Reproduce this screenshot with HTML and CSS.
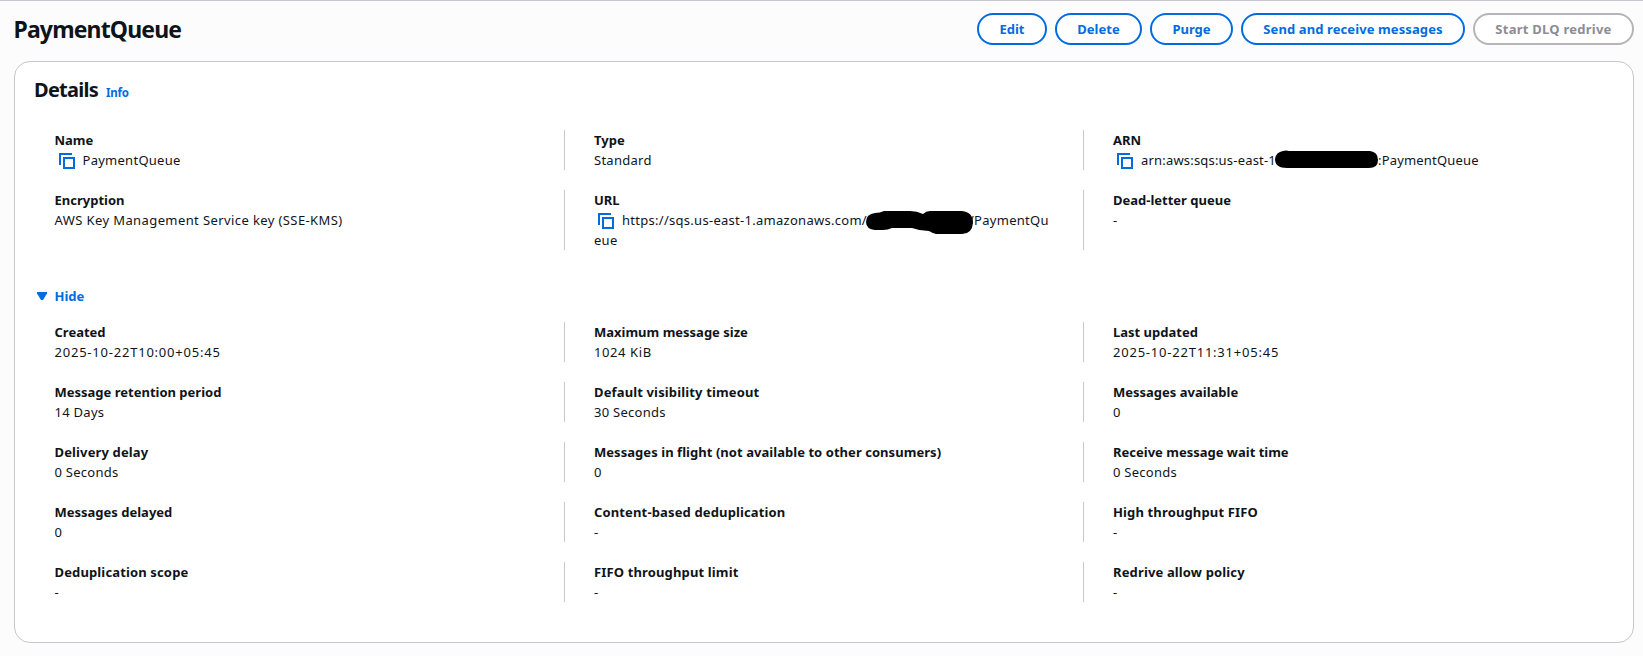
FILE: index.html
```html
<!DOCTYPE html>
<html lang="en">
<head>
<meta charset="utf-8">
<title>PaymentQueue</title>
<link rel="stylesheet" href="styles.css">
</head>
<body>
<svg width="0" height="0" class="defs"><symbol id="copy" viewBox="0 0 16 16"><path d="M13 1H1v11M5 5h10v10H5z" fill="none" stroke="currentColor" stroke-width="2"/></symbol></svg>
<main class="page">
  <header class="header">
    <h1 class="title">PaymentQueue</h1>
    <div class="actions">
      <button class="btn edit">Edit</button>
      <button class="btn delete">Delete</button>
      <button class="btn purge">Purge</button>
      <button class="btn send">Send and receive messages</button>
      <button class="btn redrive" disabled>Start DLQ redrive</button>
    </div>
  </header>
  <section class="panel">
    <div class="panel-head"><h2 class="subtitle">Details</h2><a class="info">Info</a></div>
    <dl class="grid">
      <div class="cell"><dt>Name</dt><dd><svg class="copy"><use href="#copy"/></svg>PaymentQueue</dd></div>
      <div class="cell"><dt>Type</dt><dd>Standard</dd></div>
      <div class="cell"><dt>ARN</dt><dd class="arn"><svg class="copy"><use href="#copy"/></svg>arn:aws:sqs:us-east-1<svg class="mask mask-arn" viewBox="0 0 104 20"><path d="M8 1Q11 0 14 1H95Q103 2 103 10Q103 18 94 18H12Q0 18 0 9Q1 2 8 1Z"/></svg>:PaymentQueue</dd></div>
      <div class="cell"><dt>Encryption</dt><dd class="kms">AWS Key Management Service key (SSE-KMS)</dd></div>
      <div class="cell"><dt>URL</dt><dd class="url"><svg class="copy"><use href="#copy"/></svg>https://sqs.us-east-1.amazonaws.com/<svg class="mask mask-url" viewBox="0 0 107 26"><path d="M9 3Q14 3 18 1H44Q51 1 57 4Q60 1 64 1H96Q107 2 107 13Q106 24 96 24H70Q66 23 63 21Q54 21 46 18H26Q22 20 17 20H9Q0 19 0 12Q0 4 9 3Z"/></svg>/PaymentQueue</dd></div>
      <div class="cell"><dt>Dead-letter queue</dt><dd>-</dd></div>
    </dl>
    <div class="toggle"><svg class="caret" viewBox="0 0 10 8"><path d="M0 0h10v1.5L6 8H4L0 1.5z" fill="currentColor"/></svg><span>Hide</span></div>
    <dl class="grid">
      <div class="cell"><dt>Created</dt><dd class="date">2025-10-22T10:00+05:45</dd></div>
      <div class="cell"><dt>Maximum message size</dt><dd class="size">1024 KiB</dd></div>
      <div class="cell"><dt>Last updated</dt><dd class="date">2025-10-22T11:31+05:45</dd></div>
      <div class="cell"><dt>Message retention period</dt><dd>14 Days</dd></div>
      <div class="cell"><dt class="wide">Default visibility timeout</dt><dd>30 Seconds</dd></div>
      <div class="cell"><dt>Messages available</dt><dd>0</dd></div>
      <div class="cell"><dt class="wide">Delivery delay</dt><dd>0 Seconds</dd></div>
      <div class="cell"><dt class="long">Messages in flight (not available to other consumers)</dt><dd>0</dd></div>
      <div class="cell"><dt>Receive message wait time</dt><dd>0 Seconds</dd></div>
      <div class="cell"><dt>Messages delayed</dt><dd>0</dd></div>
      <div class="cell"><dt class="wide">Content-based deduplication</dt><dd>-</dd></div>
      <div class="cell"><dt class="wide">High throughput FIFO</dt><dd>-</dd></div>
      <div class="cell"><dt class="wide">Deduplication scope</dt><dd>-</dd></div>
      <div class="cell"><dt class="wide">FIFO throughput limit</dt><dd>-</dd></div>
      <div class="cell"><dt class="wide">Redrive allow policy</dt><dd>-</dd></div>
    </dl>
  </section>
</main>
</body>
</html>
```
FILE: styles.css
```css
* { box-sizing: border-box; }
body { margin: 0; background: #fcfcfd; color: #0f141a; font: 13px/20px "Noto Sans", sans-serif; }
.defs { display: block; }
.page { height: 656px; border-top: 1px solid #c6c6cd; padding: 12px 9px 13px 14px; overflow: hidden; }
.header { display: flex; justify-content: space-between; align-items: center; height: 32px; margin-bottom: 16px; }
.title { margin: 0 0 0 -.5px; font-size: 23px; line-height: 32px; font-weight: 700; letter-spacing: -.85px; }
.actions { display: flex; gap: 8px; }
.btn { height: 32px; padding: 0; border: 2px solid #006ce0; border-radius: 16px; background: #fff; color: #006ce0; font: 700 13px/20px "Noto Sans", sans-serif; white-space: nowrap; }
.btn:disabled { border-color: #b4b4bb; color: #8c8c94; }
.edit { width: 70px; }
.delete { width: 87px; }
.purge { width: 83px; }
.send { width: 224px; letter-spacing: .1px; }
.redrive { width: 161px; letter-spacing: .25px; }
.panel { height: 582px; border: 1px solid #c6c6cd; border-radius: 16px; background: #fff; padding: 16px 0 0; }
.panel-head { display: flex; align-items: baseline; gap: 8px; padding-left: 19px; height: 52px; }
.subtitle { margin: 0; font-size: 20px; line-height: 24px; font-weight: 700; letter-spacing: -.75px; }
.info { color: #006ce0; font-size: 11.5px; font-weight: 700; letter-spacing: -.2px; }
.grid { display: grid; grid-template-columns: 509.5px 519px 1fr; row-gap: 20px; margin: 0 0 0 39.5px; }
.cell { min-width: 0; }
.cell:not(:nth-child(3n+1)) { border-left: 1px solid #c6c6cd; padding-left: 29px; }
dt { font-weight: 700; }
.wide { letter-spacing: .14px; }
.long { letter-spacing: .05px; }
dd { margin: 0; white-space: nowrap; letter-spacing: .27px; }
.kms { letter-spacing: .4px; }
.date { letter-spacing: .78px; }
.size { letter-spacing: .6px; }
.copy { width: 16px; height: 16px; margin: 0 8px 0 4px; color: #006ce0; vertical-align: -4px; }
.mask { position: relative; vertical-align: top; overflow: visible; }
.mask-arn { width: 104px; height: 20px; margin: 0 -1px 0 -1px; }
.mask-url { width: 107px; height: 26px; margin: 0 -4px -6px -1px; }
.arn { letter-spacing: .19px; }
.url { width: 461px; white-space: normal; word-break: break-all; letter-spacing: .28px; }
.toggle { display: flex; align-items: center; gap: 8px; height: 20px; margin: 36px 0 16px 21.5px; color: #006ce0; font-weight: 700; }
.caret { width: 10px; height: 8px; }
```
